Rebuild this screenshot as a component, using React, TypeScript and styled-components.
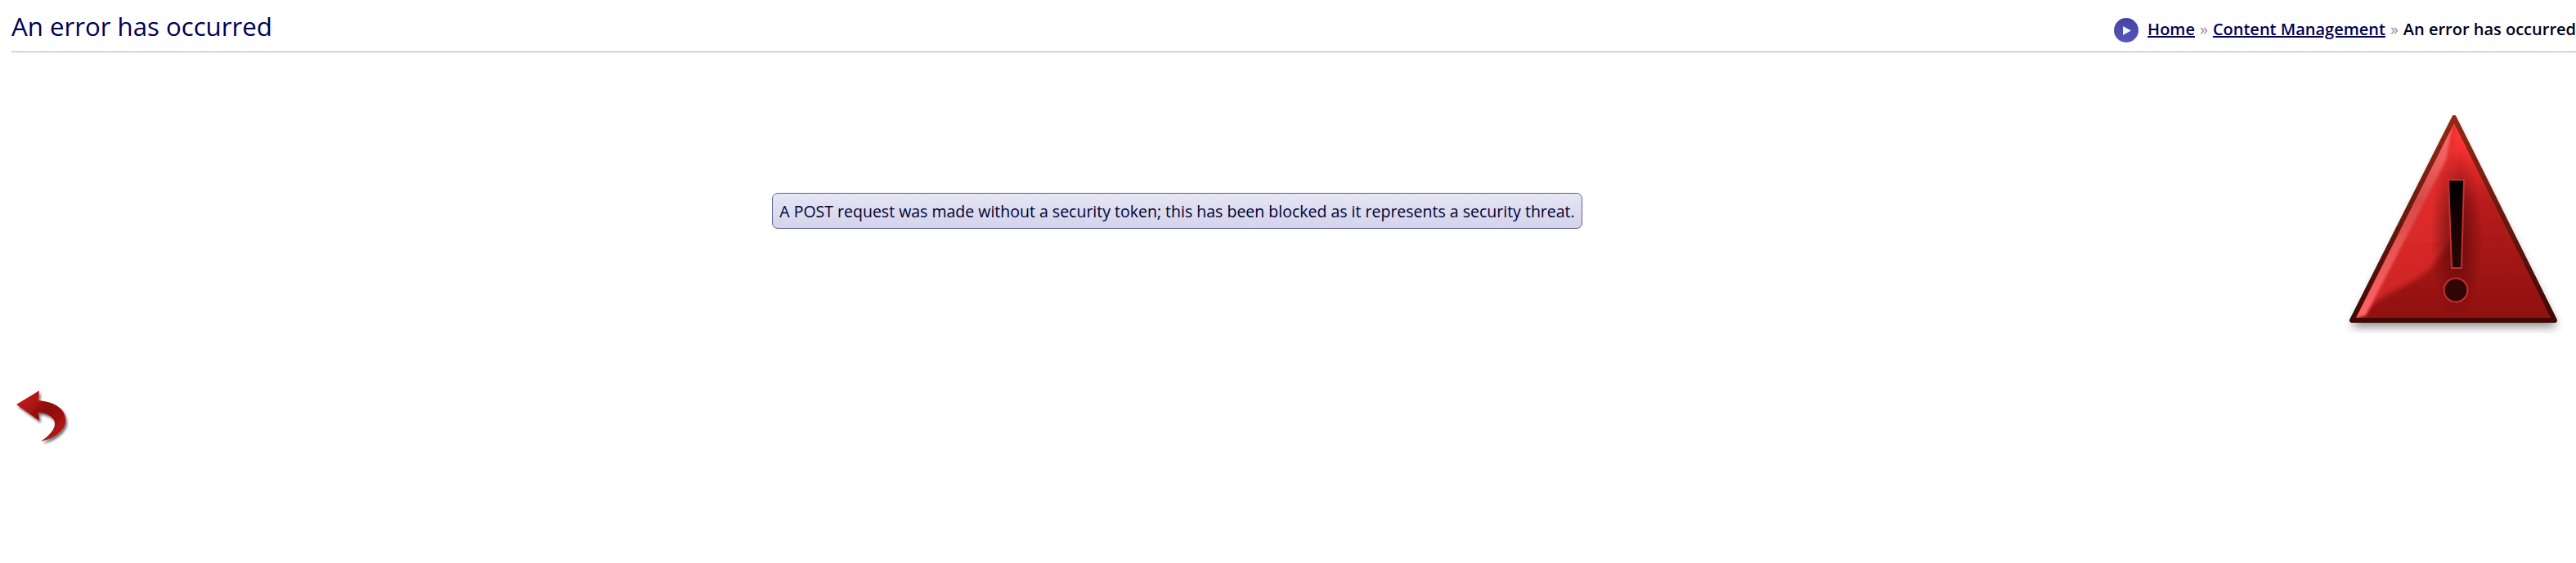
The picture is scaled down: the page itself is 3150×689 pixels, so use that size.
import React from "react";
import styled, { createGlobalStyle } from "styled-components";

const Global = createGlobalStyle`
  html, body { margin: 0; padding: 0; background: #fff; }
  body { font-family: "Open Sans", "Noto Sans", sans-serif; color: #000033; overflow: hidden; }
`;

const Page = styled.div`
  width: 3150px;
  height: 689px;
  overflow: hidden;
  padding-left: 14px;
  box-sizing: border-box;
`;

const Header = styled.header`
  display: flex;
  justify-content: space-between;
  align-items: flex-start;
  height: 63px;
  border-bottom: 1px solid #a9a9c6;
`;

const Title = styled.h1`
  margin: 0;
  padding-top: 10px;
  font-size: 31.2px;
  line-height: 44px;
  font-weight: 400;
  color: #000055;
`;

const Breadcrumbs = styled.nav`
  display: flex;
  align-items: center;
  height: 30px;
  margin-top: 21px;
  font-size: 20px;
  line-height: 30px;
  white-space: nowrap;
  font-weight: 600;
  color: #000022;
`;

const PlayBadge = styled.svg`
  width: 30px;
  height: 30px;
  margin: 1px 11px 0 0;
  flex: none;
`;

const Crumb = styled.a`
  color: #000055;
  text-decoration: underline;
`;

const Sep = styled.span`
  color: #8c8ca8;
  font-weight: 400;
  margin: 0 6px;
`;

const Body = styled.section`
  display: flex;
  align-items: center;
  height: 300px;
  margin-top: 44px;
`;

const Centre = styled.div`
  flex: 1;
  display: flex;
  justify-content: center;
`;

const Message = styled.p`
  margin: 0;
  box-sizing: border-box;
  height: 44px;
  padding: 0 8px;
  display: flex;
  align-items: center;
  white-space: nowrap;
  font-size: 19.5px;
  color: #000033;
  background: linear-gradient(#e6e6f5, #d3d3ec);
  border: 1px solid #5f5f95;
  border-radius: 7px;
`;

const WarnIcon = styled.svg`
  width: 285px;
  height: 300px;
  flex: none;
`;

const BackLink = styled.a`
  display: block;
  width: 70px;
  height: 72px;
  margin-top: 64px;
`;

const BackIcon = styled.svg`
  display: block;
  width: 70px;
  height: 72px;
`;

export default function App() {
  return (
    <Page>
      <Global />
      <Header>
        <Title>An error has occurred</Title>
        <Breadcrumbs>
          <PlayBadge viewBox="0 0 30 30">
            <defs>
              <linearGradient id="pb" x1="0" y1="0" x2="0" y2="1">
                <stop offset="0" stopColor="#4343a5" />
                <stop offset="1" stopColor="#5757bb" />
              </linearGradient>
            </defs>
            <circle cx="15" cy="15" r="15" fill="url(#pb)" />
            <path d="M11 10 L21 15.5 L11 21 Z" fill="#f2f2fa" />
          </PlayBadge>
          <Crumb>Home</Crumb>
          <Sep>»</Sep>
          <Crumb>Content Management</Crumb>
          <Sep>»</Sep>
          <span>An error has occurred</span>
        </Breadcrumbs>
      </Header>
      <Body>
        <Centre>
          <Message>A POST request was made without a security token; this has been blocked as it represents a security threat.</Message>
        </Centre>
        <WarnIcon viewBox="0 0 285 300">
          <defs>
            <linearGradient id="tri" x1="0" y1="0" x2="0" y2="1">
              <stop offset="0.1" stopColor="#ff3434" />
              <stop offset="0.42" stopColor="#b81b1b" />
              <stop offset="1" stopColor="#8f1010" />
            </linearGradient>
            <linearGradient id="lift" x1="0" y1="0" x2="0" y2="1">
              <stop offset="0" stopColor="#ef3030" />
              <stop offset="1" stopColor="#c92424" />
            </linearGradient>
            <linearGradient id="shine" x1="0" y1="1" x2="0" y2="0">
              <stop offset="0" stopColor="#ff6464" />
              <stop offset="0.6" stopColor="#d84a4a" />
              <stop offset="1" stopColor="#ff7070" />
            </linearGradient>
            <linearGradient id="bang" x1="0" y1="0" x2="0" y2="1">
              <stop offset="0" stopColor="#000" />
              <stop offset="1" stopColor="#2a0505" />
            </linearGradient>
            <linearGradient id="rim" x1="0" y1="0" x2="0" y2="1">
              <stop offset="0" stopColor="#8f2a14" />
              <stop offset="1" stopColor="#3f0805" />
            </linearGradient>
            <radialGradient id="glow" cx="0.5" cy="0.5" r="0.5">
              <stop offset="0" stopColor="#3f0404" stopOpacity="0.7" />
              <stop offset="1" stopColor="#3f0404" stopOpacity="0" />
            </radialGradient>
            <filter id="soft" x="-20%" y="-20%" width="140%" height="140%">
              <feGaussianBlur stdDeviation="6" />
            </filter>
            <filter id="blur1" x="-20%" y="-20%" width="140%" height="140%">
              <feGaussianBlur stdDeviation="1.5" />
            </filter>
            <filter id="blur3" x="-20%" y="-20%" width="140%" height="140%">
              <feGaussianBlur stdDeviation="3" />
            </filter>
            <clipPath id="triClip">
              <path d="M136 36 L11 284 L259 284 Z" />
            </clipPath>
          </defs>
          <path d="M136 40 L10 288 L262 288 Z" fill="#000" opacity="0.45" filter="url(#soft)" transform="translate(0 4)" />
          <path d="M136 36 L11 284 L259 284 Z" fill="url(#tri)" />
          <g clipPath="url(#triClip)">
            <path d="M136 30 L0 290 L28 272 C50 250 85 240 105 222 C120 205 130 190 140 170 Z" fill="url(#lift)" filter="url(#blur3)" />
            <path d="M134 44 L14 282 L28 278 L126 88 Z" fill="url(#shine)" filter="url(#blur1)" />
            <ellipse cx="139" cy="180" rx="32" ry="105" fill="url(#glow)" />
          </g>
          <path d="M136 36 L11 284 L259 284 Z" fill="none" stroke="url(#rim)" strokeWidth="6" strokeLinejoin="round" />
          <path d="M129 112 L148 112 L145 220 L133 220 Z" fill="url(#bang)" stroke="#c23030" strokeWidth="2" />
          <circle cx="138" cy="247" r="14.5" fill="#2f0505" stroke="#c23030" strokeWidth="2" />
        </WarnIcon>
      </Body>
      <BackLink>
        <BackIcon viewBox="0 0 70 72">
          <defs>
            <linearGradient id="arr" x1="0" y1="0" x2="1" y2="1">
              <stop offset="0" stopColor="#d82020" />
              <stop offset="0.5" stopColor="#8c0c0c" />
              <stop offset="1" stopColor="#c01818" />
            </linearGradient>
            <filter id="ds" x="-20%" y="-20%" width="150%" height="150%">
              <feDropShadow dx="2" dy="3" stdDeviation="1.6" floodColor="#000" floodOpacity="0.55" />
            </filter>
          </defs>
          <path d="M6 23 L34 6 L33 18 C55 20 68 30 66 45 C65 55 50 66 36 68 C48 60 56 50 52 42 C48 36 40 33 33 33 L34 43 Z" fill="url(#arr)" filter="url(#ds)" />
        </BackIcon>
      </BackLink>
    </Page>
  );
}
